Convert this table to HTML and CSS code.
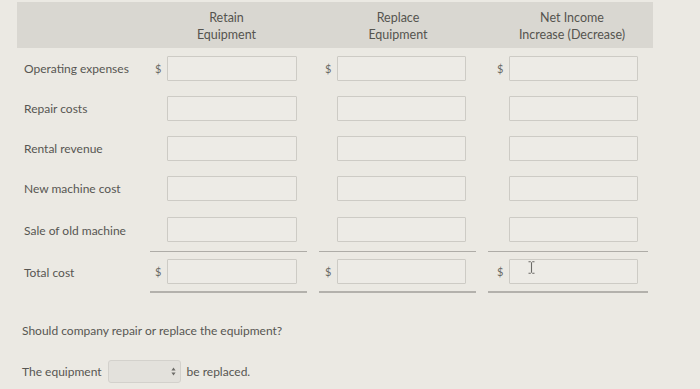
FILE: index.html
```html
<!DOCTYPE html>
<html lang="en">
<head>
    <meta charset="UTF-8">
    <meta name="viewport" content="width=device-width, initial-scale=1.0">
    <title>Retain or Replace Equipment</title>
    <link rel="stylesheet" href="styles.css">
</head>
<body>
    <div class="sheet">
        <div class="grid head">
            <div></div>
            <div class="head-col">Retain<br>Equipment</div>
            <div class="head-col">Replace<br>Equipment</div>
            <div class="head-col">Net Income<br>Increase (Decrease)</div>
        </div>

        <div class="grid row">
            <div class="label">Operating expenses</div>
            <div class="cell"><span class="cur">$</span><input class="amt" type="text"></div>
            <div class="cell"><span class="cur">$</span><input class="amt" type="text"></div>
            <div class="cell"><span class="cur">$</span><input class="amt" type="text"></div>
        </div>
        <div class="grid row">
            <div class="label">Repair costs</div>
            <div class="cell"><span class="cur"></span><input class="amt" type="text"></div>
            <div class="cell"><span class="cur"></span><input class="amt" type="text"></div>
            <div class="cell"><span class="cur"></span><input class="amt" type="text"></div>
        </div>
        <div class="grid row">
            <div class="label">Rental revenue</div>
            <div class="cell"><span class="cur"></span><input class="amt" type="text"></div>
            <div class="cell"><span class="cur"></span><input class="amt" type="text"></div>
            <div class="cell"><span class="cur"></span><input class="amt" type="text"></div>
        </div>
        <div class="grid row">
            <div class="label">New machine cost</div>
            <div class="cell"><span class="cur"></span><input class="amt" type="text"></div>
            <div class="cell"><span class="cur"></span><input class="amt" type="text"></div>
            <div class="cell"><span class="cur"></span><input class="amt" type="text"></div>
        </div>
        <div class="grid row sub">
            <div class="label">Sale of old machine</div>
            <div class="cell"><span class="cur"></span><input class="amt" type="text"></div>
            <div class="cell"><span class="cur"></span><input class="amt" type="text"></div>
            <div class="cell"><span class="cur"></span><input class="amt" type="text"></div>
        </div>
        <div class="grid row total">
            <div class="label">Total cost</div>
            <div class="cell"><span class="cur">$</span><input class="amt" type="text"></div>
            <div class="cell"><span class="cur">$</span><input class="amt" type="text"></div>
            <div class="cell caret-cell">
                <span class="cur">$</span><input class="amt" type="text">
                <!-- text cursor hovering over the field -->
                <svg class="ibeam" width="7" height="13" viewBox="0 0 7 13">
                    <path d="M0.5 0.8h2.3M4.2 0.8h2.3M3.5 1.2v10.6M0.5 12.2h2.3M4.2 12.2h2.3" stroke="#6b6a66" stroke-width="1.1" fill="none"/>
                </svg>
            </div>
        </div>

        <p class="question">Should company repair or replace the equipment?</p>
        <div class="answer">
            <span>The equipment</span>
            <div class="choice">
                <svg class="arrows" width="5" height="9" viewBox="0 0 5 9">
                    <path d="M2.5 0.5L4.6 3.4H0.4Z M2.5 8.5L4.6 5.6H0.4Z" fill="#6d6c68"/>
                </svg>
            </div>
            <span>be replaced.</span>
        </div>
    </div>
</body>
</html>
```

FILE: styles.css
```css
body {
    margin: 0;
    background: #ebe9e3;
    font-family: Lato, "Open Sans", sans-serif;
    font-size: 12px;
    color: #575652;
}
.sheet {
    padding: 2px 0 0 17px;
}
.grid {
    display: grid;
    grid-template-columns: 121px 157px 157px 160px;
    column-gap: 12px;
}
.head {
    width: 636px;
    height: 46px;
    background: #d9d7d1;
    align-items: center;
}
.head-col {
    text-align: center;
    font-size: 12.5px;
    line-height: 17px;
    padding: 2px 4px 0 0;
    color: #55544f;
}
.head-col:nth-child(3) {
    padding: 2px 0 0 1px;
}
.head-col:nth-child(4) {
    padding: 2px 0 0 8px;
}
.row {
    height: 40px;
    align-items: center;
}
.row.sub {
    height: 44px;
}
.row.total {
    height: 41px;
}
.label {
    padding-left: 7px;
}
.cell {
    display: flex;
    align-items: center;
    padding: 0 10px 0 5px;
}
.cell:nth-child(3) {
    padding-left: 6px;
}
.cell:nth-child(4) {
    padding-left: 9px;
}
.sub .cell {
    align-self: stretch;
    border-bottom: 1px solid #aeaca7;
}
.total .cell {
    align-self: stretch;
    border-bottom: 2px solid #b3b1ac;
}
.cur {
    width: 12px;
    flex: none;
    color: #6a6965;
    font-size: 11px;
}
.amt {
    flex: 1;
    min-width: 0;
    height: 25px;
    box-sizing: border-box;
    border: 1px solid #cdcbc5;
    border-radius: 1px;
    background: #edebe6;
    padding: 0 6px;
    font: inherit;
}
.caret-cell {
    position: relative;
}
.ibeam {
    position: absolute;
    left: 40px;
    top: 9px;
}
.question {
    margin: 30px 0 0 5px;
    line-height: 16px;
}
.answer {
    display: flex;
    align-items: center;
    gap: 6px;
    margin: 21px 0 0 5px;
}
.choice {
    width: 73px;
    height: 23px;
    box-sizing: border-box;
    border: 1px solid #d3d1cc;
    border-radius: 3px;
    background: #e3e1dc;
    display: flex;
    align-items: center;
    justify-content: flex-end;
    padding-right: 4px;
}
```
